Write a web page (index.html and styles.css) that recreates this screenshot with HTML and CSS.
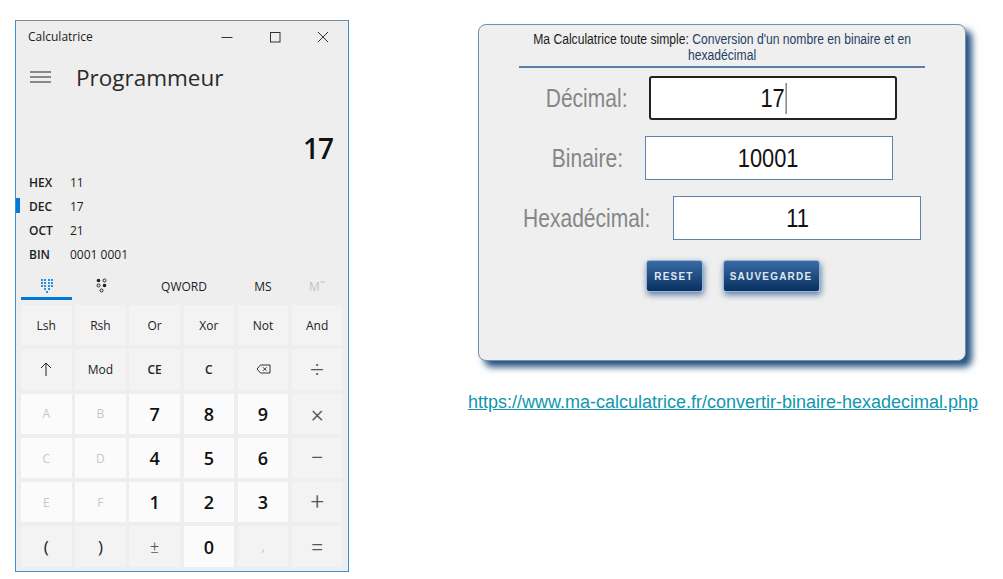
FILE: index.html
```html
<!DOCTYPE html>
<html lang="fr">
<head>
  <meta charset="UTF-8" />
  <title>Calculatrice binaire</title>
  <link rel="stylesheet" href="styles.css">
</head>
<body>
  <section class="calc">
    <div class="titlebar">
      <span class="app-name">Calculatrice</span>
      <div class="win-btns">
        <svg width="12" height="12" viewBox="0 0 12 12"><path d="M0.5 6.5h11" stroke="#333" fill="none"/></svg>
        <svg width="12" height="12" viewBox="0 0 12 12"><rect x="1.5" y="1.5" width="9.500" height="9.500" stroke="#333" fill="none"/></svg>
        <svg width="12" height="12" viewBox="0 0 12 12"><path d="M1 1l10 10M11 1L1 11" stroke="#333" fill="none"/></svg>
      </div>
    </div>
    <div class="mode">
      <svg class="burger" width="21" height="12" viewBox="0 0 21 12"><path d="M0 1h21M0 6h21M0 11h21" stroke="#222" stroke-width="1.100" fill="none"/></svg>
      <span class="mode-name">Programmeur</span>
    </div>
    <div class="display">17</div>
    <div class="radix">
      <div class="radix-row"><b>HEX</b><span>11</span></div>
      <div class="radix-row active"><b>DEC</b><span>17</span></div>
      <div class="radix-row"><b>OCT</b><span>21</span></div>
      <div class="radix-row"><b>BIN</b><span>0001 0001</span></div>
    </div>
    <div class="tabs">
      <div class="tab tab-on">
        <svg width="14" height="16" viewBox="0 0 14 16" fill="#2b8fe0">
          <rect x="1" y="1" width="2" height="2"/><rect x="4" y="1" width="2" height="2"/><rect x="8" y="1" width="2" height="2"/><rect x="11" y="1" width="2" height="2"/>
          <rect x="1" y="4" width="2" height="2"/><rect x="4" y="4" width="2" height="2"/><rect x="8" y="4" width="2" height="2"/><rect x="11" y="4" width="2" height="2"/>
          <rect x="1" y="7" width="2" height="2"/><rect x="4" y="7" width="2" height="2"/><rect x="8" y="7" width="2" height="2"/><rect x="11" y="7" width="2" height="2"/>
          <rect x="4" y="10" width="2" height="2"/><rect x="8" y="10" width="2" height="2"/><rect x="6" y="13" width="2" height="2"/>
        </svg>
      </div>
      <div class="tab">
        <svg width="14" height="16" viewBox="0 0 14 16">
          <circle cx="3.500" cy="2.500" r="1.800" fill="#222"/><circle cx="9.500" cy="2.500" r="1.500" fill="none" stroke="#222"/>
          <circle cx="3.500" cy="7.500" r="1.500" fill="none" stroke="#222"/><circle cx="9.500" cy="7.500" r="1.800" fill="#222"/>
          <circle cx="6.500" cy="12.500" r="1.500" fill="none" stroke="#222"/>
        </svg>
      </div>
      <div class="tab">QWORD</div>
      <div class="tab">MS</div>
      <div class="tab tab-off">M˜</div>
    </div>
    <div class="keys">
      <div class="key">Lsh</div><div class="key">Rsh</div><div class="key">Or</div><div class="key">Xor</div><div class="key">Not</div><div class="key">And</div>
      <div class="key">
        <svg width="12" height="14" viewBox="0 0 12 14"><path d="M6 14V1M1 6l5-5 5 5" stroke="#222" fill="none"/></svg>
      </div>
      <div class="key">Mod</div><div class="key key-ce">CE</div><div class="key key-ce">C</div>
      <div class="key">
        <svg width="15" height="10" viewBox="0 0 15 10"><path d="M4.500 1H14v8H4.500L1 5z M7 3.300l3.500 3.500M10.500 3.300L7 6.800" stroke="#333" fill="none"/></svg>
      </div>
      <div class="key key-op">÷</div>
      <div class="key key-num key-dim">A</div><div class="key key-num key-dim">B</div><div class="key key-num">7</div><div class="key key-num">8</div><div class="key key-num">9</div><div class="key key-op">×</div>
      <div class="key key-num key-dim">C</div><div class="key key-num key-dim">D</div><div class="key key-num">4</div><div class="key key-num">5</div><div class="key key-num">6</div><div class="key key-op">−</div>
      <div class="key key-num key-dim">E</div><div class="key key-num key-dim">F</div><div class="key key-num">1</div><div class="key key-num">2</div><div class="key key-num">3</div><div class="key key-op">+</div>
      <div class="key key-paren">(</div><div class="key key-paren">)</div><div class="key key-op key-pm">±</div><div class="key key-num">0</div><div class="key key-comma">,</div><div class="key key-op">=</div>
    </div>
  </section>

  <section class="web">
    <div class="card">
      <div class="card-head">
        <h1 class="card-title">Ma Calculatrice toute simple: <span class="title-blue">Conversion d'un nombre en binaire et en<br>hexadécimal</span></h1>
      </div>
      <div class="field">
        <div class="field-label label-dec"><span class="narrow">Décimal:</span></div>
        <div class="field-box field-focus"><span class="narrow caret">17</span></div>
      </div>
      <div class="field field-bin">
        <div class="field-label label-bin"><span class="narrow">Binaire:</span></div>
        <div class="field-box"><span class="narrow">10001</span></div>
      </div>
      <div class="field">
        <div class="field-label label-hex"><span class="narrow">Hexadécimal:</span></div>
        <div class="field-box"><span class="narrow">11</span></div>
      </div>
      <div class="actions">
        <button class="btn btn-reset">RESET</button>
        <button class="btn btn-save">SAUVEGARDE</button>
      </div>
    </div>
    <a class="source" href="#">https://www.ma-calculatrice.fr/convertir-binaire-hexadecimal.php</a>
  </section>
</body>
</html>
```

FILE: styles.css
```css
html, body {
  margin: 0;
  padding: 0;
  background: #fff;
}
body {
  display: flex;
  align-items: flex-start;
  width: 1003px;
  height: 579px;
  overflow: hidden;
  font-family: "Open Sans", sans-serif;
}

/* calculatrice windows */
.calc {
  box-sizing: border-box;
  width: 334px;
  height: 552px;
  margin: 20px 0 0 15px;
  background: #eeeeee;
  border: 1px solid #3f8fd8;
  border-top-color: #7a8a98;
  color: #1c1c1c;
}
.titlebar {
  display: flex;
  justify-content: space-between;
  align-items: center;
  height: 31px;
  padding: 0 19px 0 12px;
}
.app-name {
  font-size: 12px;
  color: #222;
}
.win-btns {
  display: flex;
  gap: 36px;
}
.mode {
  display: flex;
  align-items: center;
  gap: 25px;
  height: 50px;
  padding-left: 14px;
}
.mode-name {
  font-size: 22.500px;
  color: #2a2a2a;
}
.display {
  padding: 33px 15px 0 0;
  text-align: right;
  font-size: 28px;
  font-weight: 600;
  line-height: 26px;
  letter-spacing: -1px;
  color: #111;
}
.radix {
  margin-top: 9px;
}
.radix-row {
  position: relative;
  display: flex;
  align-items: center;
  height: 24px;
  padding-left: 13px;
  font-size: 12px;
}
.radix-row b {
  width: 41px;
  font-weight: 600;
}
.radix-row.active::before {
  content: "";
  position: absolute;
  left: 0;
  top: 4px;
  width: 4px;
  height: 15px;
  background: #0078d7;
}
.tabs {
  display: grid;
  grid-template-columns: 51px 60px 104px 54px 54px;
  height: 33px;
  margin: 1px 0 0 5px;
}
.tab {
  display: flex;
  align-items: center;
  justify-content: center;
  padding-top: 5px;
  box-sizing: border-box;
  font-size: 12px;
  font-weight: 500;
}
.tab-on {
  border-bottom: 3px solid #0078d7;
  padding-top: 8px;
}
.tab-off {
  color: #c2c2c2;
  font-weight: 400;
}
.keys {
  display: grid;
  grid-template-columns: repeat(6, 50.500px);
  grid-auto-rows: 40.300px;
  gap: 4px 3.700px;
  margin: 5px 0 0 5px;
}
.key {
  display: flex;
  align-items: center;
  justify-content: center;
  background: #f3f3f3;
  font-size: 12px;
  color: #222;
}
.key-ce {
  font-weight: 600;
}
.key-num {
  background: #fbfbfb;
  font-size: 18px;
  font-weight: 600;
  color: #111;
}
.key-dim {
  font-size: 12px;
  font-weight: 400;
  color: #c8c8c8;
}
.key-op {
  font-family: Roboto, sans-serif;
  font-weight: 300;
  font-size: 24px;
  color: #555;
}
.key-pm {
  font-size: 17px;
}
.key-paren {
  font-size: 17px;
}
.key-comma {
  color: #bbb;
}

/* site web */
.web {
  display: flex;
  flex-direction: column;
  align-items: center;
  width: 510px;
  margin: 24px 0 0 119px;
}
.card {
  box-sizing: border-box;
  width: 488px;
  height: 337px;
  margin-right: 2px;
  padding-top: 6px;
  background: #efefef;
  border: 1px solid #6f8fb5;
  border-radius: 8px;
  box-shadow: 6px 6px 7px #24507f;
  font-family: "Liberation Sans", sans-serif;
}
.card-head {
  box-sizing: border-box;
  display: flex;
  justify-content: center;
  width: 406px;
  height: 37px;
  margin: 0 auto 8px;
  border-bottom: 2px solid #5b7fa8;
}
.card-title {
  flex: none;
  margin: 0;
  text-align: center;
  white-space: nowrap;
  font-size: 14px;
  font-weight: 400;
  line-height: 16px;
  color: #1c1c1c;
  transform: scaleX(0.866);
}
.title-blue {
  color: #1f3f66;
}
.field {
  display: flex;
  justify-content: center;
  align-items: center;
  gap: 22px;
  height: 44px;
  margin-bottom: 16px;
}
.field-bin {
  padding-left: 1px;
}
/* pas de police etroite installee, on resserre le texte */
.narrow {
  flex: none;
  display: inline-block;
  white-space: nowrap;
  transform: scaleX(0.84);
}
.field-label {
  display: flex;
  justify-content: center;
  font-size: 25px;
  color: #868686;
}
.label-dec {
  width: 80px;
}
.label-bin {
  width: 70px;
}
.label-hex {
  width: 128px;
}
.field-box {
  box-sizing: border-box;
  display: flex;
  align-items: center;
  justify-content: center;
  width: 248px;
  height: 44px;
  background: #fff;
  border: 1px solid #5f82ab;
  font-size: 26px;
  color: #111;
}
.field-focus {
  border: 2px solid #222;
  border-radius: 3px;
}
.caret {
  border-right: 1px solid #222;
  padding-right: 1px;
}
.actions {
  display: flex;
  justify-content: center;
  gap: 20px;
  margin: 20px 0 0 21px;
}
.btn {
  box-sizing: border-box;
  height: 32px;
  padding: 0;
  background: linear-gradient(#3a6ba6, #08305f);
  border: 1px solid #9db6d4;
  border-radius: 3px;
  box-shadow: 1px 3px 6px #5c7ea6;
  color: #dfe8f2;
  font-family: "Liberation Sans", sans-serif;
  font-size: 10px;
  font-weight: 700;
  letter-spacing: 1.200px;
}
.btn-reset {
  width: 57px;
}
.btn-save {
  width: 97px;
}
.source {
  margin-top: 31px;
  color: #0f97ad;
  font-family: "Liberation Sans", sans-serif;
  font-size: 18px;
  white-space: nowrap;
}
```
